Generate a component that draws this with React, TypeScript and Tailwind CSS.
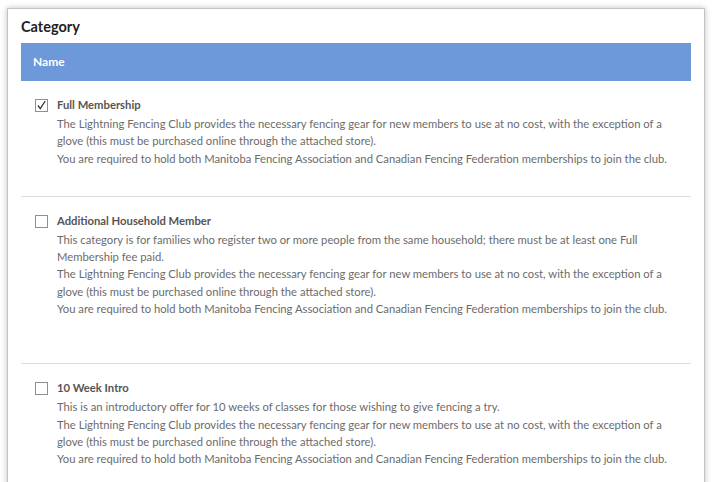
import React from "react"

const GEAR =
  "The Lightning Fencing Club provides the necessary fencing gear for new members to use at no cost, with the exception of a glove (this must be purchased online through the attached store)."
const MEMBERSHIPS =
  "You are required to hold both Manitoba Fencing Association and Canadian Fencing Federation memberships to join the club."

const categories = [
  {
    name: "Full Membership",
    checked: true,
    lines: [GEAR, MEMBERSHIPS],
    pad: "pb-[29px]",
  },
  {
    name: "Additional Household Member",
    checked: false,
    lines: [
      "This category is for families who register two or more people from the same household; there must be at least one Full Membership fee paid.",
      GEAR,
      MEMBERSHIPS,
    ],
    pad: "pb-[46px]",
  },
  {
    name: "10 Week Intro",
    checked: false,
    lines: ["This is an introductory offer for 10 weeks of classes for those wishing to give fencing a try.", GEAR, MEMBERSHIPS],
    pad: "pb-[40px]",
  },
]

function Checkbox({ checked }: { checked: boolean }) {
  return (
    <div className="w-[13px] h-[13px] border border-[#8f8f8f] bg-white flex items-center justify-center shrink-0 mt-[2px]">
      {checked && (
        <svg width="11" height="11" viewBox="0 0 11 11">
          <path d="M2 5.5 L4.3 8.6 L9.2 1" fill="none" stroke="#333" strokeWidth="1.3" />
        </svg>
      )}
    </div>
  )
}

export default function App() {
  return (
    <div className="w-[713px] h-[482px] bg-white overflow-hidden" style={{ fontFamily: "Lato, 'Noto Sans', sans-serif" }}>
      <div className="ml-[7px] mt-[8px] w-[698px] h-[520px] border border-[#c4c4c4] bg-white shadow-[0_0_6px_rgba(0,0,0,0.25)] px-[13px]">
        <h2 className="text-[14.5px] font-bold text-[#222] leading-[20px] pt-[8px] pb-[6px]">Category</h2>
        <div className="bg-[#6d98da] h-[38px] flex items-center px-[12px]">
          <span className="text-white font-bold text-[12px]">Name</span>
        </div>
        {categories.map((c, i) => (
          <div key={c.name} className={`flex gap-[9px] pl-[14px] pr-[20px] pt-[16px] ${c.pad} ${i < categories.length - 1 ? "border-b border-[#dcdcdc]" : ""}`}>
            <Checkbox checked={c.checked} />
            <div className="flex-1">
              <div className="text-[11.25px] font-bold text-[#555] leading-[16px] mb-[2px]">{c.name}</div>
              {c.lines.map((l, j) => (
                <p key={j} className="text-[11.25px] text-[#6b6b6b] leading-[17.3px]">
                  {l}
                </p>
              ))}
            </div>
          </div>
        ))}
      </div>
    </div>
  )
}
